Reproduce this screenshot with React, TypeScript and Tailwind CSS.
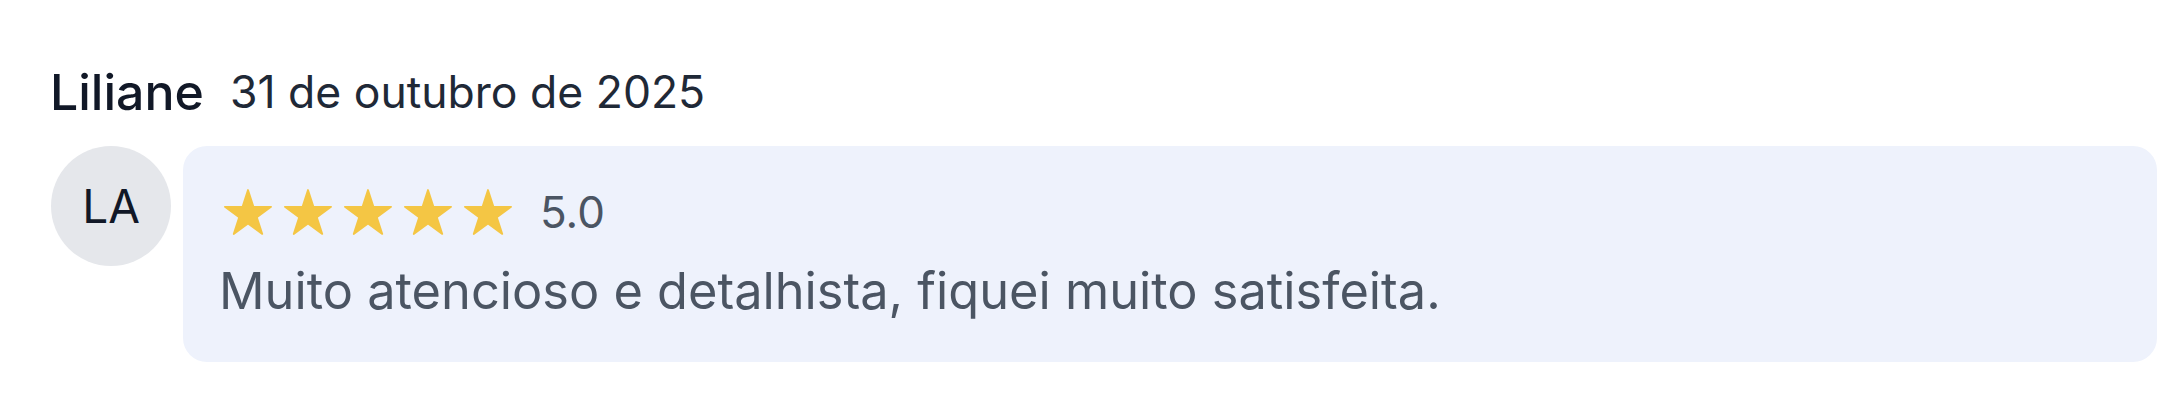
const STAR_POINTS =
  "50,0 61.8,36.32 100,36.32 69.1,58.78 80.9,95.1 50,72.65 19.1,95.1 30.9,58.78 0,36.32 38.2,36.32";

function Star() {
  return (
    <svg
      viewBox="-2 -2 104 99.1"
      className="w-[48px] h-[46px] shrink-0"
      aria-hidden="true"
    >
      <polygon
        points={STAR_POINTS}
        fill="#f4c644"
        stroke="#f4c644"
        strokeWidth={4}
        strokeLinejoin="round"
      />
    </svg>
  );
}

const review = {
  name: "Liliane",
  date: "31 de outubro de 2025",
  initials: "LA",
  rating: 5,
  text: "Muito atencioso e detalhista, fiquei muito satisfeita.",
};

export default function App() {
  return (
    <div
      className="w-full h-[404px] bg-white pt-[64px] pl-[50px] pr-[25px]"
      style={{ fontFamily: "Inter, 'Noto Sans', sans-serif" }}
    >
      {/* Header */}
      <div className="flex items-center gap-[26px] h-[56px]">
        <span className="text-[50px] leading-[56px] font-medium text-[#111827]">
          {review.name}
        </span>
        <span className="text-[44.5px] leading-[52px] text-[#1f2937]">
          {review.date}
        </span>
      </div>

      {/* Body */}
      <div className="flex items-start gap-[12px] mt-[26px]">
        <div className="w-[120px] h-[120px] rounded-full bg-[#e5e7eb] flex items-center justify-center shrink-0 ml-px">
          <span className="text-[46px] leading-none text-[#111827]">
            {review.initials}
          </span>
        </div>

        <div className="flex-1 h-[216px] rounded-[24px] bg-[#eef2fc] pl-[36px] pt-[42px]">
          <div className="flex items-center h-[48px] pl-[5px]">
            <div className="flex gap-[12px]">
              {Array.from({ length: review.rating }).map((_, i) => (
                <Star key={i} />
              ))}
            </div>
            <span className="ml-[28px] text-[44px] leading-[48px] text-[#4b5563]">
              {review.rating.toFixed(1)}
            </span>
          </div>
          <p className="mt-[19px] text-[50.5px] leading-[72px] text-[#4b5563]">
            {review.text}
          </p>
        </div>
      </div>
    </div>
  );
}
